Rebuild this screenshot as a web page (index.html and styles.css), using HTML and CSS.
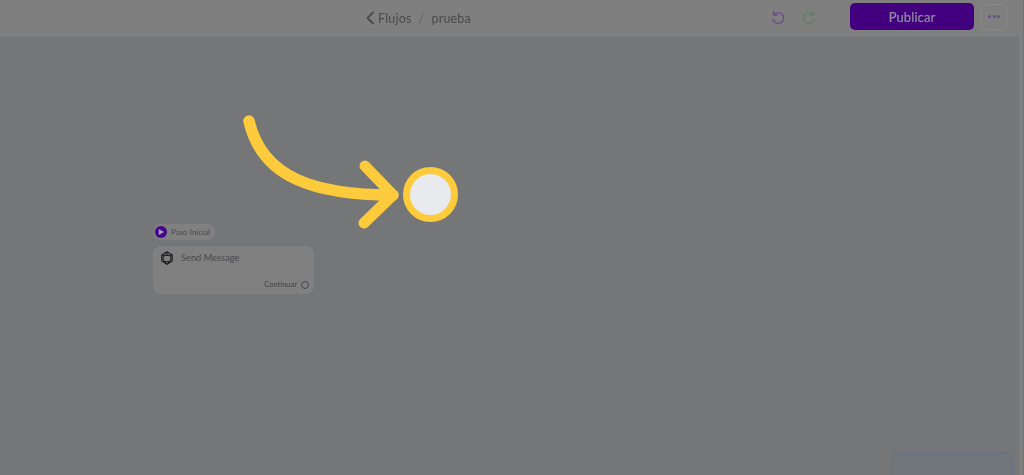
FILE: index.html
```html
<!DOCTYPE html>
<html lang="es">
<head>
<meta charset="utf-8">
<title>prueba</title>
<link rel="stylesheet" href="styles.css">
</head>
<body>
<div class="app">
  <div class="main">
    <header class="topbar">
      <nav class="crumbs">
        <svg class="back" width="10" height="14" viewBox="0 0 10 14"><path d="M8 1.500 2.500 7 8 12.500" fill="none" stroke="#4a4a4d" stroke-width="1.800" stroke-linecap="round" stroke-linejoin="round"/></svg>
        <span>Flujos</span>
        <span class="sep">/</span>
        <span>prueba</span>
      </nav>
      <div class="actions">
        <svg class="hist" width="16" height="16" viewBox="0 0 16 16"><path d="M3.600 2.400v3.600h3.600M3.800 6A5.400 5.400 0 1 1 3 10" fill="none" stroke="#6d4a94" stroke-width="1.400" stroke-linecap="round" stroke-linejoin="round"/></svg>
        <svg class="hist redo" width="16" height="16" viewBox="0 0 16 16"><path d="M12.400 2.400v3.600H8.800M12.200 6A5.400 5.400 0 1 0 13 10" fill="none" stroke="#5c8069" stroke-width="1.400" stroke-linecap="round" stroke-linejoin="round"/></svg>
        <button class="publish">Publicar</button>
        <button class="more"><i></i><i></i><i></i></button>
      </div>
    </header>
    <main class="canvas">
      <div class="node">
        <div class="tag">
          <span class="play"><svg width="6" height="6" viewBox="0 0 6 6"><path d="M.8 0 6 3 .8 6z" fill="#a9a3b4"/></svg></span>
          <span>Paso Inicial</span>
        </div>
        <div class="card">
          <div class="card-head">
            <svg width="14" height="14" viewBox="0 0 16 16"><g fill="none" stroke="#222226" stroke-width="1.400" stroke-linejoin="round"><path d="M8 1 14 4.500v7L8 15l-6-3.500v-7z"/><path d="M5 5h6l2 3-2 4H5L3 8zM8 1v4M14 4.500 11 5M2 4.500 5 5M8 15l3-3M8 15l-3-3"/></g></svg>
            <span>Send Message</span>
          </div>
          <div class="card-foot">
            <span>Continuar</span>
            <span class="port"></span>
          </div>
        </div>
      </div>
      <svg class="arrow" width="230" height="125" viewBox="0 0 230 125"><path d="M9 9C22 66 75 83 153 83" fill="none" stroke="#fecb3c" stroke-width="11.500" stroke-linecap="round"/><path d="M125 54 153 83 124 111" fill="none" stroke="#fecb3c" stroke-width="11" stroke-linecap="round" stroke-linejoin="round"/></svg>
      <div class="spot"></div>
      <div class="panel"></div>
    </main>
  </div>
  <div class="scrollbar"></div>
</div>
</body>
</html>
```

FILE: styles.css
```css
* { box-sizing: border-box; }
html, body { margin: 0; height: 100%; overflow: hidden; background: #757677; }
body { font-family: "Lato", "Open Sans", sans-serif; color: #47474b; }
.app { width: 1024px; height: 475px; display: flex; }
.main { flex: 1; display: flex; flex-direction: column; min-width: 0; }
.scrollbar { width: 5px; flex: none; background: #7f7f7f; border-right: 1px solid #737373; }
.topbar {
  height: 37px; flex: none; display: flex; align-items: center; justify-content: center;
  position: relative; background: #7f7f7f; border-bottom: 1px solid #77787a;
  filter: blur(.45px);
}
.crumbs { display: flex; align-items: center; gap: 4px; margin-left: -183px; font-size: 12.500px; letter-spacing: .2px; color: #4a4a4d; }
.crumbs .sep { margin: 0 3px; color: #636366; }
.back { margin-right: -1px; }
.actions { position: absolute; right: 12px; top: 3px; display: flex; align-items: center; }
.hist { margin-right: 15px; }
.redo { margin-right: 33px; }
.publish {
  width: 124px; height: 27px; border: 0; border-radius: 5px; background: #42007e; color: #938ea2;
  font: 400 13px "Lato", sans-serif; letter-spacing: .1px; padding: 0; -webkit-text-stroke: .2px #938ea2;
}
.more {
  width: 26px; height: 26px; margin-left: 7px; padding: 0; display: flex; align-items: center; justify-content: center; gap: 1.500px;
  background: transparent; border: 1px solid #8a8a8b; border-radius: 6px;
}
.more i { width: 3px; height: 3px; border-radius: 50%; background: #6d4a94; }
.canvas { flex: 1; position: relative; overflow: hidden; }
.node { position: absolute; left: 153px; top: 187px; width: 161px; filter: blur(.5px); }
.tag {
  display: flex; width: 63px; align-items: center; gap: 4px; height: 16px; padding: 0 5px 0 2px; border-radius: 8px;
  background: #808081; font-size: 8px; white-space: nowrap; color: #48474d;
}
.play { width: 12px; height: 12px; flex: none; border-radius: 50%; background: #44058c; display: flex; align-items: center; justify-content: center; }
.card { margin-top: 6px; height: 48px; border-radius: 8px; background: #808081; padding: 4px 5px 0 7px; }
.card-head { display: flex; align-items: center; gap: 7px; font-size: 9.300px; color: #47474b; height: 15px; }
.card-foot { display: flex; justify-content: flex-end; align-items: center; gap: 4px; margin-top: 15px; font-size: 7.500px; color: #3f3f43; }
.port { width: 8px; height: 8px; border-radius: 50%; border: 1px solid #47474b; }
.arrow { position: absolute; left: 240px; top: 75px; }
.spot { position: absolute; left: 403px; top: 130px; width: 55px; height: 55px; border-radius: 50%; background: #e9eaee; border: 7px solid #fecb3c; }
.panel { position: absolute; left: 891px; top: 415px; width: 122px; height: 40px; border-radius: 8px 8px 0 0; background: #70757a; border: 1px solid #6a6e84; filter: blur(.4px); }
```
